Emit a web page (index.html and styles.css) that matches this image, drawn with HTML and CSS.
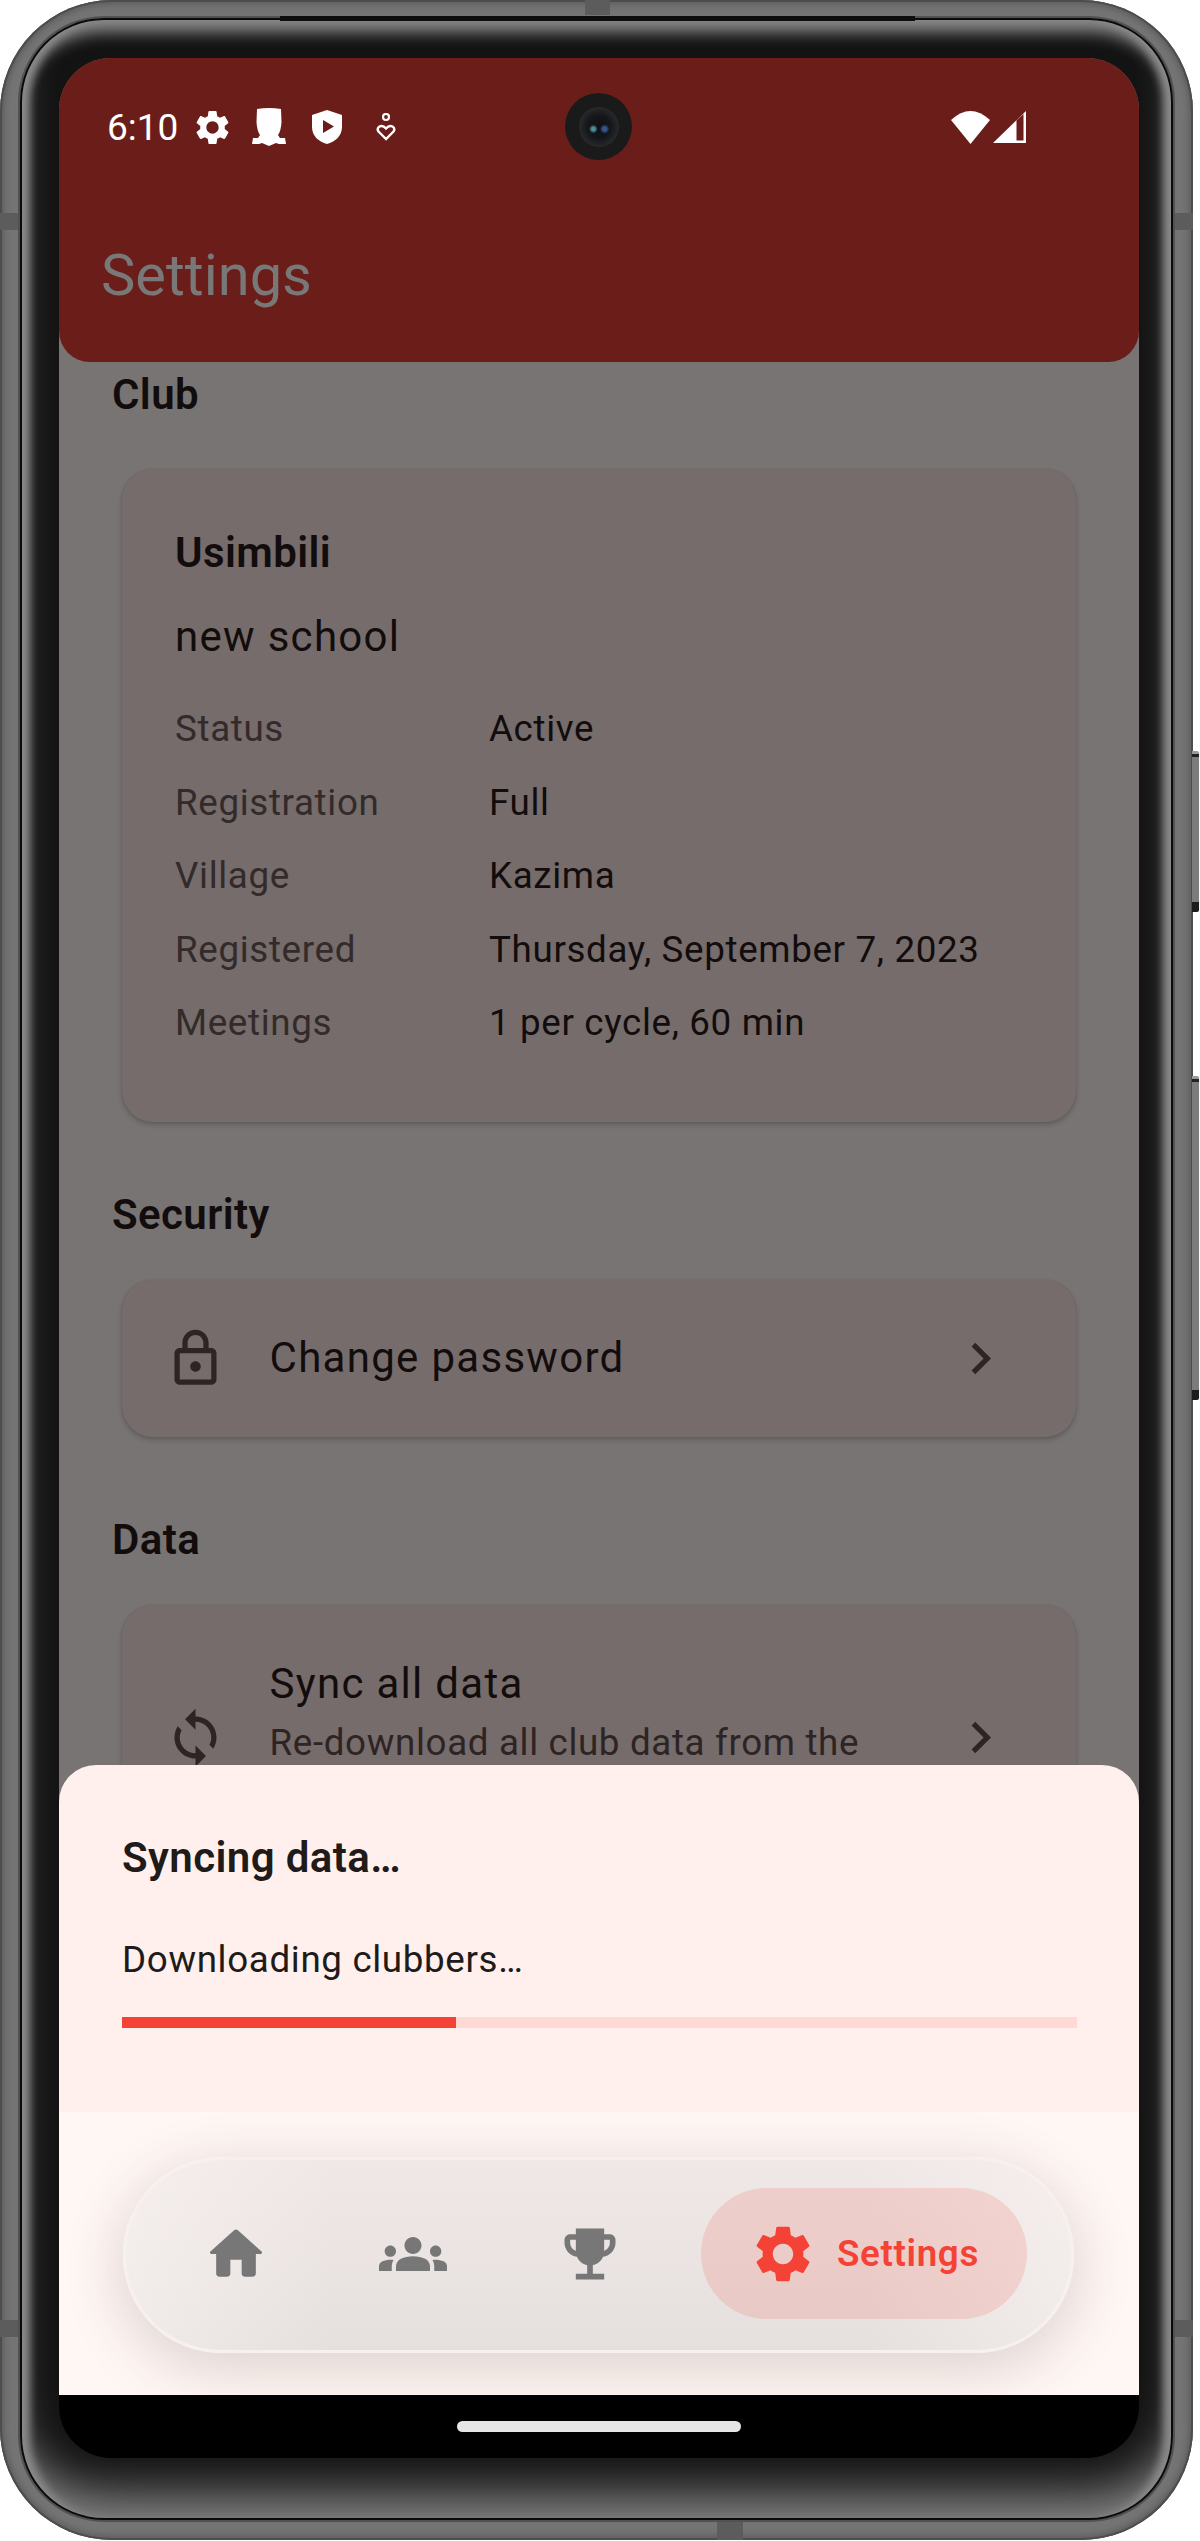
FILE: index.html
```html
<!DOCTYPE html>
<html lang="en">
<head>
    <meta charset="UTF-8">
    <meta name="viewport" content="width=device-width, initial-scale=1.0">
    <title>Settings</title>
    <link rel="stylesheet" href="styles.css">
</head>
<body>
    <div class="phone">
        <!-- hardware details that sit on the metal frame -->
        <span class="side-btn side-btn-power"></span>
        <span class="side-btn side-btn-volume"></span>
        <span class="notch notch-top"></span>
        <span class="notch notch-bottom"></span>
        <span class="notch notch-side notch-lt"></span>
        <span class="notch notch-side notch-lb"></span>
        <span class="notch notch-side notch-rt"></span>
        <span class="notch notch-side notch-rb"></span>
        <span class="seam"></span>

        <div class="bezel">
            <div class="screen">
                <div class="app">
                    <header class="app-bar">
                        <div class="status-bar">
                            <span class="time">6:10</span>
                            <svg class="st-gear" viewBox="0 0 24 24"><path d="M19.14 12.94c.04-.3.06-.61.06-.94 0-.32-.02-.64-.07-.94l2.03-1.58c.18-.14.23-.41.12-.61l-1.92-3.32c-.12-.22-.37-.29-.59-.22l-2.39.96c-.5-.38-1.03-.7-1.62-.94l-.36-2.54c-.04-.24-.24-.41-.48-.41h-3.84c-.24 0-.43.17-.47.41l-.36 2.54c-.59.24-1.13.57-1.62.94l-2.39-.96c-.22-.08-.47 0-.59.22L2.74 8.87c-.12.21-.08.47.12.61l2.03 1.58c-.05.3-.09.63-.09.94s.02.64.07.94l-2.03 1.58c-.18.14-.23.41-.12.61l1.92 3.32c.12.22.37.29.59.22l2.39-.96c.5.38 1.03.7 1.62.94l.36 2.54c.05.24.24.41.48.41h3.84c.24 0 .44-.17.47-.41l.36-2.54c.59-.24 1.13-.56 1.62-.94l2.39.96c.22.08.47 0 .59-.22l1.92-3.32c.12-.22.07-.47-.12-.61l-2.01-1.58zM12 15.6c-1.98 0-3.6-1.62-3.6-3.6s1.62-3.6 3.6-3.6 3.6 1.62 3.6 3.6-1.62 3.6-3.6 3.6z"/></svg>
                            <svg class="st-badge" viewBox="0 0 34 38"><path d="M5 1Q17 -1 29 1L29.500 14Q29 23 26 27L28 30H33L34 36H27L24 35L17 38L10 35L7 36H0L1 30H6L8 27Q5 23 4.500 14Z"/></svg>
                            <svg class="st-shield" viewBox="0 0 30 34"><path fill-rule="evenodd" d="M15 0L30 5V17C30 26 23 32 15 34C7 32 0 26 0 17V5ZM11 10V23L22 16.500Z"/></svg>
                            <svg class="st-person" viewBox="0 0 20 28"><circle cx="10" cy="4" r="3" fill="none" stroke="#fff" stroke-width="2.200"/><path d="M10 26L2.500 18.500Q0.500 15.500 3.500 13.500Q7 12 10 15.500Q13 12 16.500 13.500Q19.500 15.500 17.500 18.500Z" fill="none" stroke="#fff" stroke-width="2.400"/></svg>
                            <span class="status-spacer"></span>
                            <svg class="st-wifi" viewBox="0 0 39 33"><path d="M0 9Q19.500 -9 39 9L19.500 33Z"/></svg>
                            <svg class="st-signal" viewBox="0 0 33 32"><path fill-rule="evenodd" d="M33 0V32H0ZM23.500 9.500V29.500H30.500V3Z"/></svg>
                        </div>
                        <h1 class="app-title">Settings</h1>
                    </header>
                    <span class="camera"><span class="lens"></span></span>

                    <main class="page">
                        <section class="section section-club">
                            <h2 class="section-title">Club</h2>
                            <div class="card club-card">
                                <div class="club-name">Usimbili</div>
                                <div class="club-sub">new school</div>
                                <dl class="club-rows">
                                    <dt>Status</dt><dd>Active</dd>
                                    <dt>Registration</dt><dd>Full</dd>
                                    <dt>Village</dt><dd>Kazima</dd>
                                    <dt>Registered</dt><dd>Thursday, September 7, 2023</dd>
                                    <dt>Meetings</dt><dd>1 per cycle, 60 min</dd>
                                </dl>
                            </div>
                        </section>

                        <section class="section">
                            <h2 class="section-title">Security</h2>
                            <div class="card tile">
                                <svg class="tile-icon" viewBox="0 0 24 24"><path d="M18 8h-1V6c0-2.760-2.240-5-5-5S7 3.240 7 6v2H6c-1.100 0-2 .9-2 2v10c0 1.100.9 2 2 2h12c1.100 0 2-.9 2-2V10c0-1.100-.9-2-2-2zM9 6c0-1.660 1.340-3 3-3s3 1.340 3 3v2H9V6zm9 14H6V10h12v10zm-6-3c1.100 0 2-.9 2-2s-.9-2-2-2-2 .9-2 2 .9 2 2 2z"/></svg>
                                <div class="tile-text">
                                    <div class="tile-title">Change password</div>
                                </div>
                                <svg class="tile-icon" viewBox="0 0 24 24"><path d="M10 6L8.590 7.410 13.170 12l-4.580 4.590L10 18l6-6z"/></svg>
                            </div>
                        </section>

                        <section class="section">
                            <h2 class="section-title">Data</h2>
                            <div class="card tile tile-tall">
                                <svg class="tile-icon" viewBox="0 0 24 24"><path d="M12 4V1L8 5l4 4V6c3.310 0 6 2.690 6 6 0 1.010-.25 1.970-.7 2.800l1.460 1.460C19.540 15.030 20 13.570 20 12c0-4.420-3.580-8-8-8zm0 14c-3.310 0-6-2.690-6-6 0-1.010.25-1.970.7-2.800L5.240 7.740C4.460 8.970 4 10.430 4 12c0 4.420 3.580 8 8 8v3l4-4-4-4v3z"/></svg>
                                <div class="tile-text">
                                    <div class="tile-title">Sync all data</div>
                                    <div class="tile-sub">Re-download all club data from the server</div>
                                </div>
                                <svg class="tile-icon" viewBox="0 0 24 24"><path d="M10 6L8.590 7.410 13.170 12l-4.580 4.590L10 18l6-6z"/></svg>
                            </div>
                        </section>
                    </main>

                    <div class="sheet">
                        <div class="sheet-body">
                            <div class="sheet-title">Syncing data…</div>
                            <div class="sheet-text">Downloading clubbers…</div>
                            <div class="progress"><div class="progress-fill" style="width: 35%"></div></div>
                        </div>
                        <nav class="nav-area">
                            <div class="nav-pill">
                                <div class="nav-item">
                                    <svg class="nav-icon" viewBox="0 0 24 24"><path d="M10 19v-5h4v5c0 .55.45 1 1 1h3c.55 0 1-.45 1-1v-7h1.700c.46 0 .68-.57.33-.87L12.670 3.600c-.38-.34-.96-.34-1.340 0l-8.360 7.530c-.34.3-.13.87.33.87H5v7c0 .55.45 1 1 1h3c.55 0 1-.45 1-1z"/></svg>
                                </div>
                                <div class="nav-item">
                                    <svg class="nav-icon" viewBox="0 0 24 24"><path d="M4 13c1.100 0 2-.9 2-2s-.9-2-2-2-2 .9-2 2 .9 2 2 2zm1.130 1.100c-.37-.06-.74-.1-1.130-.1-.99 0-1.930.21-2.780.58C.48 14.900 0 15.620 0 16.430V18h4.500v-1.610c0-.83.23-1.610.63-2.290zM20 13c1.100 0 2-.9 2-2s-.9-2-2-2-2 .9-2 2 .9 2 2 2zm4 3.430c0-.81-.48-1.530-1.220-1.850-.85-.37-1.790-.58-2.780-.58-.39 0-.76.04-1.130.1.4.68.63 1.460.63 2.290V18H24v-1.570zm-7.760-2.780c-1.170-.52-2.610-.9-4.240-.9-1.630 0-3.070.39-4.240.9C6.680 14.130 6 15.210 6 16.390V18h12v-1.610c0-1.180-.68-2.260-1.760-2.740zM12 12c1.660 0 3-1.340 3-3s-1.340-3-3-3-3 1.340-3 3 1.340 3 3 3z"/></svg>
                                </div>
                                <div class="nav-item">
                                    <svg class="nav-icon" viewBox="0 0 24 24"><path d="M19 5h-2V3H7v2H5c-1.100 0-2 .9-2 2v1c0 2.550 1.920 4.630 4.390 4.940.63 1.500 1.980 2.630 3.610 2.960V19H7v2h10v-2h-4v-3.100c1.630-.33 2.980-1.460 3.610-2.960C19.080 12.630 21 10.550 21 8V7c0-1.100-.9-2-2-2zM5 8V7h2v3.820C5.840 10.400 5 9.300 5 8zm14 0c0 1.300-.84 2.400-2 2.820V7h2v1z"/></svg>
                                </div>
                                <div class="nav-active">
                                    <svg class="nav-icon" viewBox="0 0 24 24"><path d="M19.14 12.94c.04-.3.06-.61.06-.94 0-.32-.02-.64-.07-.94l2.03-1.58c.18-.14.23-.41.12-.61l-1.92-3.32c-.12-.22-.37-.29-.59-.22l-2.39.96c-.5-.38-1.03-.7-1.62-.94l-.36-2.54c-.04-.24-.24-.41-.48-.41h-3.84c-.24 0-.43.17-.47.41l-.36 2.54c-.59.24-1.13.57-1.62.94l-2.39-.96c-.22-.08-.47 0-.59.22L2.74 8.87c-.12.21-.08.47.12.61l2.03 1.58c-.05.3-.09.63-.09.94s.02.64.07.94l-2.03 1.58c-.18.14-.23.41-.12.61l1.92 3.32c.12.22.37.29.59.22l2.39-.96c.5.38 1.03.7 1.62.94l.36 2.54c.05.24.24.41.48.41h3.84c.24 0 .44-.17.47-.41l.36-2.54c.59-.24 1.13-.56 1.62-.94l2.39.96c.22.08.47 0 .59-.22l1.92-3.32c.12-.22.07-.47-.12-.61l-2.01-1.58zM12 15.6c-1.98 0-3.6-1.62-3.6-3.6s1.62-3.6 3.6-3.6 3.6 1.62 3.6 3.6-1.62 3.6-3.6 3.6z"/></svg>
                                    <span class="nav-label">Settings</span>
                                </div>
                            </div>
                        </nav>
                    </div>
                </div>
                <div class="gesture-bar"><span class="gesture-handle"></span></div>
            </div>
        </div>
    </div>
</body>
</html>
```

FILE: styles.css
```css
* {
    box-sizing: border-box;
}

body {
    margin: 0;
    background: #fff;
    font-family: Roboto, "Liberation Sans", sans-serif;
    color: #120d0c;
}

/* device frame */
.phone {
    position: relative;
    width: 1193px;
    height: 2540px;
    padding: 18px 20px 20px 20px;
    border-radius: 112px;
    background: #747474;
    box-shadow: inset 0 0 0 2px #4d4d4d, inset 0 0 6px 4px #5c5c5c;
}

.bezel {
    height: 100%;
    padding: 40px 34px 62px 39px;
    border-radius: 84px;
    background: #131313;
    box-shadow:
        0 0 0 2px #525252,
        inset 0 0 0 2px #0a0a0a,
        inset 0 24px 16px -10px #8c8c8c,
        inset 0 -40px 50px -15px #8a8a8a,
        inset 14px 0 8px -4px #8c8c8c,
        inset -14px 0 8px -4px #8c8c8c;
}

.side-btn {
    position: absolute;
    left: 1192px;
    width: 7px;
    border-radius: 0 2px 2px 0;
    background: linear-gradient(#999 0, #999 3px, #222 3px, #222 6px, #7c7c7c 6px, #7c7c7c calc(100% - 10px), #1c1c1c calc(100% - 10px));
}

.side-btn-power {
    top: 751px;
    height: 161px;
}

.side-btn-volume {
    top: 1076px;
    height: 324px;
}

.notch {
    position: absolute;
    background: #5c5c5c;
}

.notch-top {
    top: 0;
    left: 585px;
    width: 25px;
    height: 15px;
}

.notch-bottom {
    bottom: 0;
    left: 717px;
    width: 26px;
    height: 18px;
}

.notch-side {
    width: 18px;
    height: 17px;
}

.notch-lt {
    top: 213px;
    left: 0;
}

.notch-lb {
    top: 2320px;
    left: 0;
}

.notch-rt {
    top: 213px;
    right: 0;
}

.notch-rb {
    top: 2320px;
    right: 0;
}

.seam {
    position: absolute;
    top: 16px;
    left: 280px;
    width: 635px;
    height: 5px;
    background: #0c0c0c;
}

/* screen */
.screen {
    width: 1080px;
    height: 2400px;
    border-radius: 52px;
    overflow: hidden;
    background: #000;
}

.app {
    position: relative;
    display: flex;
    flex-direction: column;
    height: 2337px;
    overflow: hidden;
    background: #777473;
}

.app-bar {
    flex: none;
    height: 304px;
    padding: 0 113px 0 42px;
    border-radius: 0 0 31px 31px;
    background: #6b1e19;
}

.status-bar {
    display: flex;
    align-items: center;
    height: 138px;
    padding-left: 6px;
    fill: #fff;
    color: #fff;
}

.time {
    width: 85px;
    font-size: 37px;
}

.st-gear {
    width: 41px;
    height: 41px;
}

.st-badge {
    width: 34px;
    height: 38px;
    margin-left: 19px;
}

.st-shield {
    width: 30px;
    height: 34px;
    margin-left: 26px;
}

.st-person {
    width: 20px;
    height: 28px;
    margin-left: 34px;
}

.status-spacer {
    flex: 1;
}

.st-wifi {
    width: 39px;
    height: 33px;
}

.st-signal {
    width: 33px;
    height: 32px;
    margin-left: 3px;
}

.app-title {
    margin: 42px 0 0;
    font-size: 57.75px;
    font-weight: 400;
    line-height: 74px;
    color: #787878;
}

.camera {
    position: absolute;
    top: 35px;
    left: 506px;
    width: 67px;
    height: 67px;
    border-radius: 50%;
    background: radial-gradient(circle at 50% 54%, #1a1a1b 0, #1a1a1b 88%, #000 92%);
    display: flex;
    align-items: center;
    justify-content: center;
}

.lens {
    width: 40px;
    height: 40px;
    border-radius: 50%;
    background:
        radial-gradient(circle at 36% 55%, #4f8f96 0, #4f8f96 5%, transparent 13%),
        radial-gradient(circle at 64% 55%, #35558f 0, #35558f 6%, transparent 14%),
        radial-gradient(circle, #0e1013 0, #14161a 40%, #2a2a2c 72%, #1e1e20 100%);
}

/* scrolled page behind the sheet */
.page {
    flex: 1;
    min-height: 0;
    padding: 7px 0 0 53px;
}

.section {
    margin-bottom: 77.5px;
}

.section-club {
    margin-bottom: 67px;
}

.section-title {
    margin: 0 0 39px;
    font-size: 42px;
    font-weight: 600;
    line-height: 52px;
    letter-spacing: 0.4px;
    color: #120d0c;
}

.card {
    width: 954px;
    margin-left: 10px;
    border-radius: 31px;
    background: #756c6b;
    box-shadow: 0 3px 5px rgba(0, 0, 0, 0.18), 0 0 2px rgba(0, 0, 0, 0.12);
}

.club-card {
    margin-top: 48px;
    padding: 58px 53px 62px;
}

.club-name {
    font-size: 42px;
    font-weight: 600;
    line-height: 52px;
    letter-spacing: 0.4px;
}

.club-sub {
    margin-top: 28px;
    font-size: 42px;
    line-height: 60px;
    letter-spacing: 1.3px;
}

.club-rows {
    display: grid;
    grid-template-columns: 314px 1fr;
    margin: 25px 0 0;
    font-size: 36.75px;
    line-height: 73.5px;
    letter-spacing: 0.65px;
}

.club-rows dt {
    color: #332a2a;
}

.club-rows dd {
    margin: 0;
}

.tile {
    display: flex;
    align-items: center;
    gap: 43px;
    height: 157px;
    padding: 0 64px 0 41.5px;
}

.tile-tall {
    height: 265px;
}

.tile-icon {
    flex: none;
    width: 63px;
    height: 63px;
    fill: #2e2423;
}

.tile-text {
    flex: 1;
    min-width: 0;
}

.tile-title {
    font-size: 42px;
    line-height: 60px;
    letter-spacing: 1.3px;
}

.tile-sub {
    margin-top: 3px;
    font-size: 36.75px;
    line-height: 52px;
    letter-spacing: 0.65px;
    color: #2e2423;
}

/* bottom sheet and navigation */
.sheet {
    position: absolute;
    left: 0;
    right: 0;
    bottom: 0;
    border-radius: 37px 37px 0 0;
    overflow: hidden;
    background: #fff0ed;
}

.sheet-body {
    height: 347px;
    padding: 67px 62px 0 63px;
    color: #201a19;
}

.sheet-title {
    font-size: 42px;
    font-weight: 600;
    line-height: 52px;
    letter-spacing: 0.4px;
}

.sheet-text {
    margin-top: 49.5px;
    font-size: 36.75px;
    line-height: 52px;
    letter-spacing: 0.65px;
}

.progress {
    height: 11px;
    margin-top: 31.5px;
    background: #ffd9d3;
}

.progress-fill {
    height: 100%;
    background: #f44336;
}

.nav-area {
    height: 283px;
    padding: 45px 65px 0 64px;
    overflow: hidden;
    background: #fff7f4;
}

.nav-pill {
    display: flex;
    align-items: center;
    height: 196px;
    padding: 0 0 3px 21.5px;
    border: 3px solid #f6f1ef;
    border-radius: 98px;
    background:
        linear-gradient(90deg, rgba(250, 244, 242, 0.55), rgba(250, 244, 242, 0) 22%, rgba(250, 244, 242, 0) 78%, rgba(250, 244, 242, 0.55)),
        linear-gradient(#f0e8e6, #e5e0de);
    box-shadow: 0 14px 60px rgba(70, 50, 45, 0.2);
}

.nav-item {
    display: flex;
    justify-content: center;
    width: 177px;
}

.nav-icon {
    flex: none;
    width: 68px;
    height: 68px;
    fill: #777;
}

.nav-active {
    display: flex;
    align-items: center;
    gap: 20px;
    width: 326px;
    height: 131px;
    margin-left: 22.5px;
    padding-left: 48px;
    border-radius: 66px;
    background: rgba(244, 67, 54, 0.15);
}

.nav-active .nav-icon {
    fill: #f44336;
}

.nav-label {
    font-size: 36.75px;
    font-weight: 600;
    letter-spacing: 0.65px;
    color: #f44336;
}

.gesture-bar {
    display: flex;
    align-items: center;
    justify-content: center;
    height: 63px;
}

.gesture-handle {
    width: 284px;
    height: 11px;
    border-radius: 6px;
    background: #e6e6e6;
}
```
